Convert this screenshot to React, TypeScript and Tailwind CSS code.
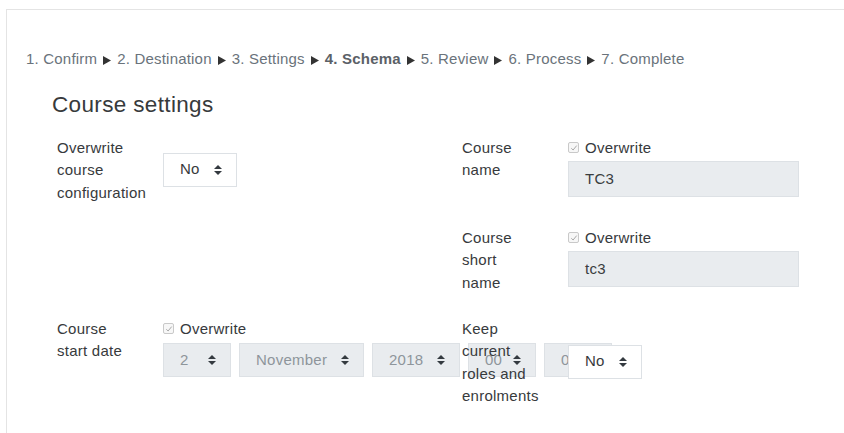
import React from "react";

const Arrows = ({ color = "#343a40" }: { color?: string }) => (
  <svg width="8" height="10" viewBox="0 0 8 10" className="shrink-0">
    <path d="M4 0 L8 4 H0 Z M0 6 H8 L4 10 Z" fill={color} />
  </svg>
);

const Tri = () => (
  <svg width="8" height="9" viewBox="0 0 8 9" className="inline-block mx-[6px]">
    <path d="M0 0 L8 4.5 L0 9 Z" fill="#333" />
  </svg>
);

function Select({
  value,
  w,
  disabled,
}: {
  value: string;
  w: string;
  disabled?: boolean;
}) {
  return (
    <div
      className={
        "flex h-[34px] shrink-0 items-center justify-between border pl-4 pr-[14px] " +
        w +
        (disabled
          ? " bg-[#e9ecef] border-[#dde1e5] text-[#8e959b]"
          : " bg-white border-[#dde1e5] text-[#373a3c]")
      }
    >
      <span>{value}</span>
      <Arrows />
    </div>
  );
}

const Check = () => (
  <span className="flex items-center gap-[6px] h-[22.5px] text-[#373a3c]">
    <span className="flex h-[11px] w-[11px] items-center justify-center rounded-[2px] border border-[#c9c9c9] bg-[#f7f7f7]">
      <svg width="8" height="8" viewBox="0 0 8 8">
        <path d="M1.3 4.3 L3.1 6 L6.7 1.6" stroke="#a9a9a9" strokeWidth="1" fill="none" />
      </svg>
    </span>
    <span>Overwrite</span>
  </span>
);

const Label = ({ children }: { children: React.ReactNode }) => (
  <div className="w-[106px] shrink-0">
    <div className="w-[72px] text-[#373a3c]">{children}</div>
  </div>
);

const Input = ({ value }: { value: string }) => (
  <div className="mt-[2px] flex h-[36px] w-[231px] items-center border border-[#dde1e5] bg-[#e9ecef] pl-4 text-[#3a3d40]">
    {value}
  </div>
);

export default function App() {
  return (
    <div
      className="h-[433px] w-[844px] overflow-hidden bg-white pt-[9px] pl-[6px]"
      style={{ fontFamily: '"Liberation Sans", Arial, sans-serif' }}
    >
      <div className="h-full border-t border-l border-[#e4e4e4] text-[15px] leading-[22.5px] tracking-[0.25px]">
        <div className="pt-[38px] pl-[19px] text-[#6a737b] whitespace-nowrap tracking-[0.2px]">
          1. Confirm
          <Tri />
          2. Destination
          <Tri />
          3. Settings
          <Tri />
          <b className="text-[#5b6167]">4. Schema</b>
          <Tri />
          5. Review
          <Tri />
          6. Process
          <Tri />
          7. Complete
        </div>
        <h3 className="mt-[20px] pl-[45px] text-[22.5px] leading-[27px] tracking-[0.35px] text-[#373a3c]">
          Course settings
        </h3>
        <div className="mt-[19px] pl-[50px]">
          <div className="grid h-[90px] grid-cols-[405px_1fr]">
            <div className="flex">
              <Label>Overwrite course configuration</Label>
              <div className="mt-[16px]">
                <Select value="No" w="w-[74px]" />
              </div>
            </div>
            <div className="flex">
              <Label>Course name</Label>
              <div>
                <Check />
                <Input value="TC3" />
              </div>
            </div>
          </div>
          <div className="grid h-[91px] grid-cols-[405px_1fr]">
            <div />
            <div className="flex">
              <Label>Course short name</Label>
              <div>
                <Check />
                <Input value="tc3" />
              </div>
            </div>
          </div>
          <div className="grid grid-cols-[405px_1fr]">
            <div className="flex min-w-0">
              <Label>Course start date</Label>
              <div className="min-w-0">
                <Check />
                <div className="mt-[3px] flex gap-2">
                  <Select value="2" w="w-[68px]" disabled />
                  <Select value="November" w="w-[125px]" disabled />
                  <Select value="2018" w="w-[88px]" disabled />
                  <Select value="00" w="w-[68px]" disabled />
                  <Select value="00" w="w-[68px]" disabled />
                </div>
              </div>
            </div>
            <div className="flex">
              <Label>Keep current roles and enrolments</Label>
              <div className="mt-[27px]">
                <Select value="No" w="w-[74px]" />
              </div>
            </div>
          </div>
        </div>
      </div>
    </div>
  );
}
